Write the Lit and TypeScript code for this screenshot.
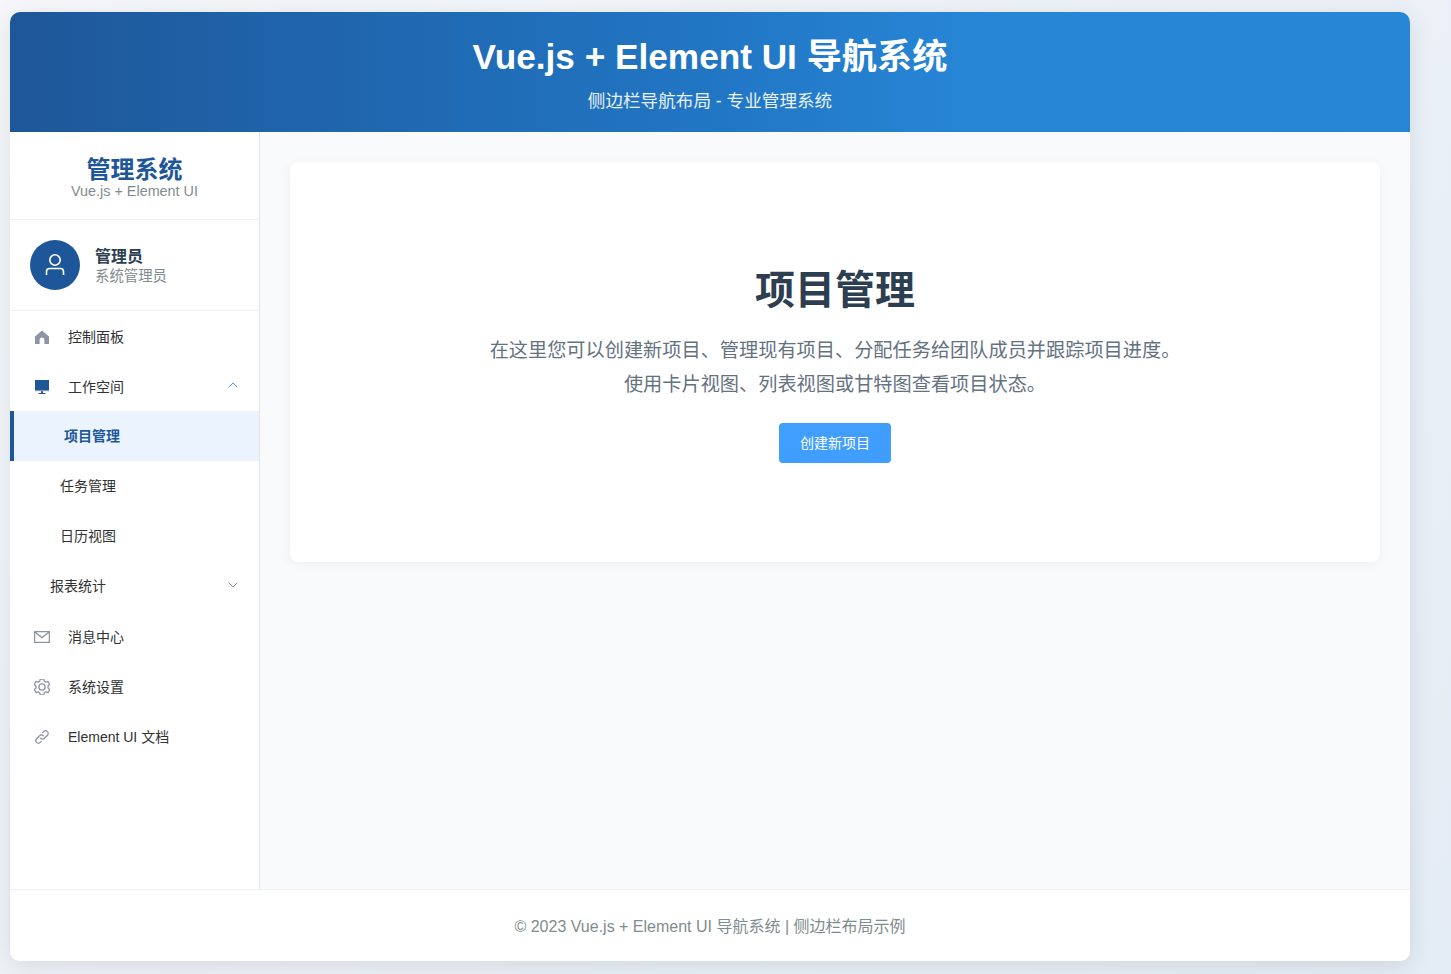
import { LitElement, html, css, svg } from "lit";
import { customElement } from "lit/decorators.js";

const ICONS = {
  home: svg`<path fill="#8c95a3" d="M8 1.5 1 7.6V15h4.600v-4.200a2.400 2.400 0 0 1 4.800 0V15H15V7.600z"/>`,
  platform: svg`<path fill="#1e5799" d="M1 1h14v10H1z"/><path fill="#8c95a3" d="M1 11h14v1.200H1z"/><path fill="#1e5799" d="M4.500 14h7v1h-7z"/><path fill="#1e5799" d="M7 12.200h2V14H7z"/>`,
  message: svg`<path fill="none" stroke="#8c95a3" stroke-width="1.300" d="M.6 2.600h14.800v10.800H.6zM.8 3l7.200 5.600L15.200 3"/>`,
  setting: svg`<g transform="translate(8 8) scale(1.1) translate(-8 -8)"><path fill="none" stroke="#8c95a3" stroke-width="1.200" stroke-linejoin="round" d="M6.400.8h3.200l.5 2 1.300.7 2-.6 1.600 2.800-1.500 1.400v1.800l1.500 1.400-1.600 2.800-2-.6-1.300.7-.5 2H6.400l-.5-2-1.300-.7-2 .6L1 10.300l1.500-1.400V7.100L1 5.700 2.600 2.900l2 .6 1.300-.7z"/><circle cx="8" cy="8" r="2.800" fill="none" stroke="#8c95a3" stroke-width="1.200"/></g>`,
  link: svg`<path fill="none" stroke="#8c95a3" stroke-width="1.300" stroke-linecap="round" d="M6.700 9.300a2.600 2.600 0 0 0 3.700 0l3-3a2.600 2.600 0 0 0-3.700-3.700l-1 1M9.300 6.700a2.600 2.600 0 0 0-3.700 0l-3 3a2.600 2.600 0 0 0 3.700 3.700l1-1"/>`,
};

@customElement("app-root")
export class AppRoot extends LitElement {
  static styles = css`
    :host {
      display: block;
      height: 974px;
      overflow: hidden;
      padding: 12px 0 0 10px;
      box-sizing: border-box;
      background: linear-gradient(135deg, #f5f7fa 0%, #e4ecf5 100%);
      font-family: "Liberation Sans", "Noto Sans CJK SC", sans-serif;
      color: #2c3e50;
    }
    .app {
      width: 1400px;
      height: 949px;
      display: flex;
      flex-direction: column;
      background: #fff;
      border-radius: 10px;
      overflow: hidden;
      box-shadow: 0 5px 25px rgba(0, 0, 0, 0.1);
    }
    .top {
      height: 120px;
      box-sizing: border-box;
      padding-top: 24px;
      text-align: center;
      color: #fff;
      background: linear-gradient(90deg, #1e5799 0%, #2176c4 50%, #2785d6 68%, #2886d7 100%);
    }
    .top h1 { margin: 0; font-size: 35.2px; line-height: 41px; font-weight: 700; }
    .top p { margin: 14px 0 0; font-size: 17.6px; line-height: 21px; opacity: 0.9; }
    .middle { flex: 1; display: flex; min-height: 0; }
    .side {
      width: 250px;
      box-sizing: border-box;
      border-right: 1px solid #e6e6e6;
      background: #fff;
      flex: none;
    }
    .brand {
      height: 88px;
      box-sizing: border-box;
      padding-top: 24px;
      text-align: center;
      border-bottom: 1px solid #eef0f3;
    }
    .brand h2 { margin: 0; font-size: 24px; line-height: 28px; font-weight: 700; color: #1e5799; }
    .brand p { margin: -1px 0 0; font-size: 14.4px; line-height: 16px; color: #7f8c8d; }
    .user {
      height: 91px;
      box-sizing: border-box;
      padding: 20px;
      display: flex;
      align-items: center;
      gap: 15px;
      border-bottom: 1px solid #eef0f3;
    }
    .avatar {
      width: 50px;
      height: 50px;
      border-radius: 50%;
      background: #1e5799;
      display: flex;
      align-items: center;
      justify-content: center;
    }
    .who { margin-top: 2px; }
    .uname { font-size: 16px; line-height: 20px; font-weight: 700; color: #2c3e50; }
    .urole { font-size: 14.4px; line-height: 17px; margin-top: 1px; color: #7f8c8d; }
    .item {
      height: 50px;
      box-sizing: border-box;
      display: flex;
      align-items: center;
      font-size: 14px;
      color: #303133;
      position: relative;
    }
    .icon { width: 16px; height: 16px; margin: 2px 18px 0 24px; flex: none; }
    .chev { width: 10px; height: 6px; position: absolute; right: 21px; top: 21px; }
    .sub-label { padding: 0 0 2px 40px; height: 50px; }
    .sub { padding: 0 0 2px 50px; }
    .active {
      padding: 0 0 2px 50px;
      background: #ebf3fe;
      border-left: 4px solid #1e5799;
      color: #1e5799;
      font-weight: 700;
    }
    .main {
      flex: 1;
      background: #f9fafc;
      padding: 30px;
      box-sizing: border-box;
      min-width: 0;
    }
    .card {
      height: 400px;
      box-sizing: border-box;
      background: #fff;
      border-radius: 8px;
      box-shadow: 0 2px 12px rgba(0, 0, 0, 0.05);
      text-align: center;
      padding-top: 100px;
    }
    .card h2 { margin: 0; font-size: 40px; line-height: 56px; font-weight: 700; color: #2c3e50; }
    .card p { margin: 15.5px 0 0; font-size: 19.2px; line-height: 34.56px; color: #64727f; }
    .btn {
      display: inline-block;
      margin-top: 20.5px;
      width: 112px;
      height: 40px;
      line-height: 40px;
      border: 0;
      padding: 0;
      border-radius: 4px;
      background: #409eff;
      color: #fff;
      font-size: 14px;
      font-family: inherit;
    }
    .foot {
      height: 72px;
      box-sizing: border-box;
      border-top: 1px solid #eef0f3;
      padding-bottom: 2px;
      display: flex;
      align-items: center;
      justify-content: center;
      font-size: 16px;
      color: #7f8c8d;
      background: #fff;
    }
  `;

  private icon(name: keyof typeof ICONS) {
    return html`<svg class="icon" viewBox="0 0 16 16">${ICONS[name]}</svg>`;
  }

  private chev(up: boolean, color: string) {
    return html`<svg class="chev" viewBox="0 0 10 6"><path fill="none" stroke=${color} stroke-width="1" d=${up ? "M.7 5.300 5 1l4.300 4.300" : "M.7.7 5 5 9.300.7"}/></svg>`;
  }

  render() {
    return html`
      <div class="app">
        <header class="top">
          <h1>Vue.js + Element UI 导航系统</h1>
          <p>侧边栏导航布局 - 专业管理系统</p>
        </header>
        <div class="middle">
          <aside class="side">
            <div class="brand">
              <h2>管理系统</h2>
              <p>Vue.js + Element UI</p>
            </div>
            <div class="user">
              <div class="avatar">
                <svg width="24" height="24" viewBox="0 0 24 24" fill="none" stroke="#fff" stroke-width="1.600">
                  <circle cx="12" cy="7" r="5.200"/>
                  <path d="M3.500 22v-3.500a3 3 0 0 1 3-3h11a3 3 0 0 1 3 3V22"/>
                </svg>
              </div>
              <div class="who">
                <div class="uname">管理员</div>
                <div class="urole">系统管理员</div>
              </div>
            </div>
            <nav>
              <div class="item">${this.icon("home")}<span>控制面板</span></div>
              <div class="item">${this.icon("platform")}<span>工作空间</span>${this.chev(true, "#409eff")}</div>
              <div class="item active"><span>项目管理</span></div>
              <div class="item sub"><span>任务管理</span></div>
              <div class="item sub"><span>日历视图</span></div>
              <div class="item sub-label"><span>报表统计</span>${this.chev(false, "#909399")}</div>
              <div class="item">${this.icon("message")}<span>消息中心</span></div>
              <div class="item">${this.icon("setting")}<span>系统设置</span></div>
              <div class="item">${this.icon("link")}<span>Element UI 文档</span></div>
            </nav>
          </aside>
          <main class="main">
            <section class="card">
              <h2>项目管理</h2>
              <p>在这里您可以创建新项目、管理现有项目、分配任务给团队成员并跟踪项目进度。<br />使用卡片视图、列表视图或甘特图查看项目状态。</p>
              <button class="btn">创建新项目</button>
            </section>
          </main>
        </div>
        <footer class="foot">© 2023 Vue.js + Element UI 导航系统 | 侧边栏布局示例</footer>
      </div>
    `;
  }
}
